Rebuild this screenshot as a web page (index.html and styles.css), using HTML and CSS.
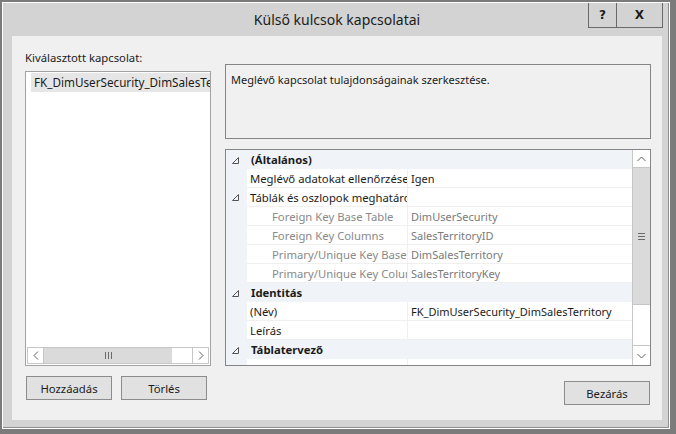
FILE: index.html
```html
<!DOCTYPE html>
<html lang="hu">
<head>
<meta charset="utf-8">
<title>Külső kulcsok kapcsolatai</title>
<link rel="stylesheet" href="styles.css">
</head>
<body>
<div class="win">
  <div class="frame">
    <div class="titlebar">
      <div class="tb-spacer"></div>
      <div class="title">Külső kulcsok kapcsolatai</div>
      <div class="caption-btns">
        <span class="cbtn help">?</span>
        <span class="cbtn close">X</span>
      </div>
    </div>
    <div class="content">
      <div class="left">
        <div class="label">Kiválasztott kapcsolat:</div>
        <div class="list">
          <div class="list-items">
            <div class="item sel">FK_DimUserSecurity_DimSalesTerritory</div>
          </div>
          <div class="hscroll">
            <div class="sb-btn sb-left"><svg width="6" height="9" viewBox="0 0 6 9"><polyline points="5,0.5 1,4.5 5,8.5" fill="none" stroke="#606060" stroke-width="1"/></svg></div>
            <div class="h-thumb"><svg width="7" height="7" viewBox="0 0 7 7"><rect x="0" y="0" width="1" height="7" fill="#6a6a6a"/><rect x="3" y="0" width="1" height="7" fill="#6a6a6a"/><rect x="6" y="0" width="1" height="7" fill="#6a6a6a"/></svg></div>
            <div class="h-track"></div>
            <div class="sb-btn sb-right"><svg width="6" height="9" viewBox="0 0 6 9"><polyline points="1,0.5 5,4.5 1,8.5" fill="none" stroke="#606060" stroke-width="1"/></svg></div>
          </div>
        </div>
        <div class="btnrow">
          <button class="btn">Hozzáadás</button>
          <button class="btn">Törlés</button>
        </div>
      </div>
      <div class="right">
        <div class="desc">Meglévő kapcsolat tulajdonságainak szerkesztése.</div>
        <div class="grid">
          <div class="rows">
            <div class="row cat">
              <div class="gut"><svg class="tri" width="7" height="7" viewBox="0 0 7 7"><polygon points="6.5,0.5 6.5,6.5 0.5,6.5" fill="none" stroke="#555" stroke-width="1"/></svg></div>
              <div class="catname">(Általános)</div>
            </div>
            <div class="row">
              <div class="gut"></div>
              <div class="name">Meglévő adatokat ellenőrzése létrehozáskor vagy újraengedélyezéskor</div>
              <div class="val">Igen</div>
            </div>
            <div class="row">
              <div class="gut"><svg class="tri" width="7" height="7" viewBox="0 0 7 7"><polygon points="6.5,0.5 6.5,6.5 0.5,6.5" fill="none" stroke="#555" stroke-width="1"/></svg></div>
              <div class="name">Táblák és oszlopok meghatározása</div>
              <div class="val"></div>
            </div>
            <div class="row sub">
              <div class="gut"></div>
              <div class="name">Foreign Key Base Table</div>
              <div class="val">DimUserSecurity</div>
            </div>
            <div class="row sub">
              <div class="gut"></div>
              <div class="name">Foreign Key Columns</div>
              <div class="val">SalesTerritoryID</div>
            </div>
            <div class="row sub">
              <div class="gut"></div>
              <div class="name">Primary/Unique Key Base Table</div>
              <div class="val">DimSalesTerritory</div>
            </div>
            <div class="row sub">
              <div class="gut"></div>
              <div class="name">Primary/Unique Key Columns</div>
              <div class="val">SalesTerritoryKey</div>
            </div>
            <div class="row cat">
              <div class="gut"><svg class="tri" width="7" height="7" viewBox="0 0 7 7"><polygon points="6.5,0.5 6.5,6.5 0.5,6.5" fill="none" stroke="#555" stroke-width="1"/></svg></div>
              <div class="catname">Identitás</div>
            </div>
            <div class="row">
              <div class="gut"></div>
              <div class="name">(Név)</div>
              <div class="val">FK_DimUserSecurity_DimSalesTerritory</div>
            </div>
            <div class="row">
              <div class="gut"></div>
              <div class="name">Leírás</div>
              <div class="val"></div>
            </div>
            <div class="row cat">
              <div class="gut"><svg class="tri" width="7" height="7" viewBox="0 0 7 7"><polygon points="6.5,0.5 6.5,6.5 0.5,6.5" fill="none" stroke="#555" stroke-width="1"/></svg></div>
              <div class="catname">Táblatervező</div>
            </div>
            <div class="row tail">
              <div class="gut"></div>
              <div class="name"></div>
              <div class="val"></div>
            </div>
          </div>
          <div class="vscroll">
            <div class="vbtn v-up"><svg width="9" height="6" viewBox="0 0 9 6"><polyline points="0.5,5 4.5,1 8.5,5" fill="none" stroke="#606060" stroke-width="1"/></svg></div>
            <div class="v-thumb"><svg width="7" height="7" viewBox="0 0 7 7"><rect x="0" y="0" width="7" height="1" fill="#6a6a6a"/><rect x="0" y="3" width="7" height="1" fill="#6a6a6a"/><rect x="0" y="6" width="7" height="1" fill="#6a6a6a"/></svg></div>
            <div class="v-track"></div>
            <div class="vbtn v-down"><svg width="9" height="6" viewBox="0 0 9 6"><polyline points="0.5,1 4.5,5 8.5,1" fill="none" stroke="#606060" stroke-width="1"/></svg></div>
          </div>
        </div>
        <div class="closerow">
          <button class="btn">Bezárás</button>
        </div>
      </div>
    </div>
  </div>
</div>
</body>
</html>
```

FILE: styles.css
```css
* { box-sizing: border-box; }

html, body {
  margin: 0;
  padding: 0;
}

body {
  width: 676px;
  height: 434px;
  overflow: hidden;
  background: #7b7b7b;
  font-family: "Noto Sans", "Open Sans", sans-serif;
  font-size: 11.3px;
  color: #1b1b1b;
}

.win {
  margin: 2px 0 0 2px;
  width: 668px;
  height: 427px;
  border: 1px solid #ffffff;
}

.frame {
  height: 100%;
  background: #d3d3d3;
  border-right: 1px solid #8e8e8e;
  border-bottom: 1px solid #8e8e8e;
  padding: 0 6px 7px 9px;
  display: flex;
  flex-direction: column;
}

/* title bar */
.titlebar {
  height: 33px;
  flex: none;
  display: grid;
  grid-template-columns: 1fr auto 1fr;
}

.title {
  font-size: 14px;
  line-height: 20px;
  margin-top: 7px;
  color: #1b1b1b;
  white-space: nowrap;
}

.caption-btns {
  justify-self: end;
  display: flex;
  margin-right: -1px;
  height: 25px;
}

.cbtn {
  height: 25px;
  border: 1px solid #6a6a6a;
  border-top: 0;
  display: flex;
  align-items: center;
  justify-content: center;
  font-family: "DejaVu Sans", sans-serif;
  font-weight: bold;
  font-size: 12px;
  color: #1b1b1b;
}

.cbtn.help { width: 29px; }
.cbtn.close { width: 46px; border-left: 0; }

/* content panel */
.content {
  flex: 1;
  background: #f0f0f0;
  display: grid;
  grid-template-columns: 186px 426px;
  column-gap: 14px;
  padding: 0 11px 0 13px;
}

.left, .right {
  display: flex;
  flex-direction: column;
}

.label {
  margin-top: 14px;
  height: 15px;
  line-height: 15px;
  white-space: nowrap;
}

.list {
  margin-top: 6px;
  height: 295px;
  border: 1px solid #a3a3a3;
  background: #ffffff;
  display: flex;
  flex-direction: column;
}

.list-items {
  flex: 1;
  padding: 1px 0 0 5px;
  overflow: hidden;
}

.item {
  height: 19px;
  line-height: 19px;
  padding-left: 3px;
  font-size: 11.7px;
  white-space: nowrap;
  overflow: hidden;
}

.item.sel { background: #e6e6e6; }

.hscroll {
  height: 17px;
  margin: 0 1px 1px 1px;
  border: 1px solid #c6c6c6;
  display: flex;
}

.sb-btn {
  display: flex;
  align-items: center;
  justify-content: center;
  background: #ffffff;
}

.sb-left { width: 16px; border-right: 1px solid #c6c6c6; }
.sb-right { width: 16px; border-left: 1px solid #c6c6c6; }

.h-thumb {
  width: 128px;
  background: #dadada;
  display: flex;
  align-items: center;
  justify-content: center;
}

.h-track { flex: 1; background: #ffffff; }

.btnrow {
  margin-top: 10px;
  padding-left: 1px;
  display: flex;
  gap: 9px;
}

.btn {
  width: 86px;
  height: 24px;
  margin: 0;
  padding: 0;
  background: #e1e1e1;
  border: 1px solid #8c8c8c;
  font-family: "Noto Sans", "Open Sans", sans-serif;
  font-size: 11.3px;
  color: #1b1b1b;
}

/* right column */
.desc {
  margin-top: 28px;
  height: 75px;
  border: 1px solid #858585;
  padding: 7px 5px;
  font-size: 11px;
  line-height: 16px;
}

.grid {
  margin-top: 10px;
  height: 217px;
  border: 1px solid #858585;
  background: #ffffff;
  display: flex;
}

.rows {
  flex: 1;
  overflow: hidden;
}

.row {
  height: 19px;
  display: grid;
  grid-template-columns: 21px 161px 1fr;
  line-height: 20px;
}

.gut {
  background: #f0f3f8;
  display: flex;
  align-items: center;
  padding-left: 6px;
}

.name, .val {
  border-bottom: 1px solid #f0f0f0;
  white-space: nowrap;
  overflow: hidden;
}

.name {
  padding-left: 3px;
  border-right: 1px solid #f0f0f0;
}

.val { padding-left: 3px; font-size: 11px; }

.row.sub .name { padding-left: 25px; color: #8a8a8a; }
.row.sub .val { color: #7a7a7a; }

.row.cat { background: #f0f3f8; }

.catname {
  grid-column: 2 / 4;
  font-weight: bold;
  padding-left: 4px;
  white-space: nowrap;
}

.vscroll {
  width: 18px;
  display: flex;
  flex-direction: column;
  border-left: 1px solid #c6c6c6;
}

.vbtn {
  display: flex;
  align-items: center;
  justify-content: center;
  background: #ffffff;
}

.v-up { height: 18px; border-bottom: 1px solid #c6c6c6; }
.v-down { height: 20px; border-top: 1px solid #c6c6c6; }

.v-thumb {
  height: 137px;
  background: #dadada;
  border-bottom: 1px solid #c6c6c6;
  display: flex;
  align-items: center;
  justify-content: center;
}

.v-track { flex: 1; background: #ffffff; }

.closerow {
  margin-top: 15px;
  padding-right: 1px;
  display: flex;
  justify-content: flex-end;
}
```
